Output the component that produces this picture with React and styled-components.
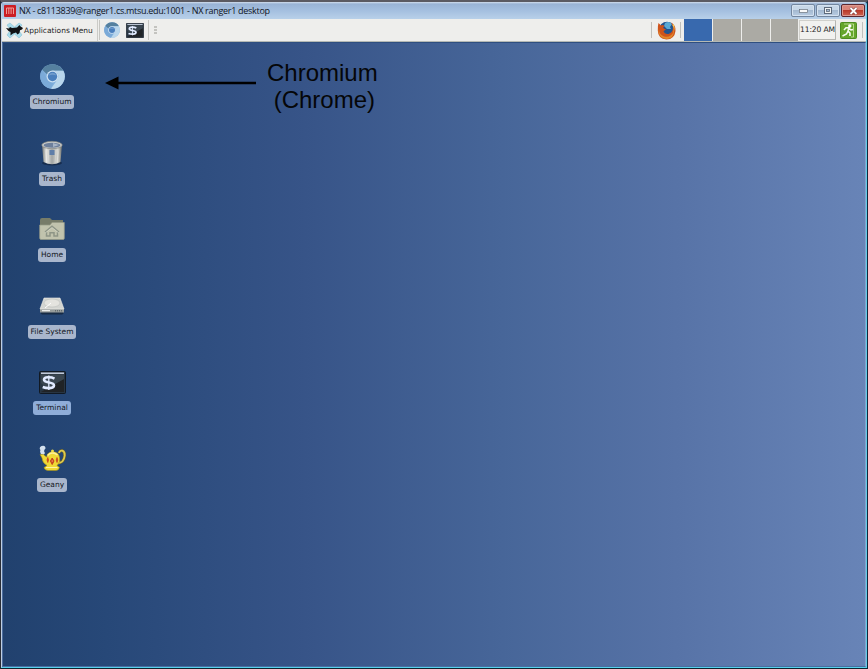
import React from "react";
import styled, { createGlobalStyle } from "styled-components";

const GlobalStyle = createGlobalStyle`
  * { box-sizing: border-box; }
  html, body { margin: 0; padding: 0; overflow: hidden; }
  svg { display: block; flex: none; }
`;

const Window = styled.div`
  width: 868px;
  height: 669px;
  display: flex;
  flex-direction: column;
  background: #243450;
  border-top: 2px solid #5b5a62;
  border-left: 1px solid #292d36;
  border-right: 1px solid #10283c;
  border-bottom: 1px solid #0c242e;
  font-family: "DejaVu Sans", sans-serif;
`;

const Frame = styled.div`
  flex: 1;
  display: flex;
  flex-direction: column;
  border-left: 1px solid #bfcfe4;
  border-right: 1px solid #5fcbe8;
  border-bottom: 1px solid #55d2ee;
  border-radius: 3px 3px 0 0;
  overflow: hidden;
  background: #6a86b4;
`;

const TitleBar = styled.header`
  height: 17px;
  flex: none;
  display: flex;
  align-items: center;
  padding: 0 1px 0 2px;
  background: linear-gradient(#d3deed 0, #99b3d5 2px, #a5c0e0 9px, #b8d0e9 100%);
`;

const Title = styled.h1`
  margin: 0 0 0 3px;
  flex: 1;
  font: 400 9px/16px "Open Sans", sans-serif;
  letter-spacing: -0.29px;
  color: #10141c;
  white-space: nowrap;
`;

const WindowButtons = styled.div`
  display: flex;
  gap: 1px;
  align-self: flex-start;
  padding-top: 2px;
`;

const WindowButton = styled.button`
  width: 24px;
  height: 13px;
  padding: 0;
  display: flex;
  align-items: center;
  justify-content: center;
  border: 1px solid ${(p) => (p.$close ? "#5a2830" : "#73869f")};
  border-radius: 2px;
  box-shadow: inset 0 0 0 1px ${(p) => (p.$close ? "#dd9a90" : "#d5e2f0")};
  background: ${(p) =>
    p.$close
      ? "linear-gradient(#d9857a 0 45%, #b93a2a 50%, #ce6452)"
      : "linear-gradient(#c7d7e8 0 45%, #a4b9d1 50%, #b9cde3)"};
`;

const Panel = styled.nav`
  height: 23px;
  flex: none;
  display: flex;
  align-items: center;
  background: #eeeeec;
  border-bottom: 1px solid #b5b9b4;
  color: #1e1e1e;
`;

const MenuButton = styled.button`
  width: 96px;
  height: 22px;
  padding: 0 0 0 4px;
  display: flex;
  align-items: center;
  gap: 1px;
  border: 0;
  border-right: 1px solid #cbcbc7;
  background: transparent;
  color: inherit;
  font: 7.5px "DejaVu Sans", sans-serif;
  white-space: nowrap;
`;

const Launchers = styled.div`
  display: flex;
  align-items: center;
  gap: 6px;
  height: 20px;
  margin-left: 1px;
  padding: 0 4px;
  border-left: 1px solid #c6c6c2;
  border-right: 1px solid #c6c6c2;
`;

const Grip = styled.div`
  display: grid;
  gap: 1px;
  margin-left: 5px;
  span { width: 3px; height: 2px; background: #c3c3bf; }
`;

const Tray = styled.div`
  margin-left: auto;
  margin-right: 3px;
  display: flex;
  align-items: center;
  height: 22px;
`;

const Rule = styled.span`
  width: 1px;
  height: 16px;
  background: #c0c0bc;
`;

const BrowserSlot = styled.div`
  width: 28px;
  display: flex;
  justify-content: center;
`;

const Pager = styled.div`
  display: grid;
  grid-template-columns: 28px 28px 28px 27px;
  gap: 1px;
  margin: 0 1px 0 3px;
`;

const Workspace = styled.span`
  height: 22px;
  background: ${(p) => (p.$active ? "#3869ae" : "#abaaa4")};
`;

const Clock = styled.time`
  width: 37px;
  height: 20px;
  border: 1px solid #d0d0cc;
  border-right-color: #b5b5b1;
  border-bottom-color: #b5b5b1;
  background: #f1f1ef;
  font: 7.6px/18px "DejaVu Sans", sans-serif;
  letter-spacing: -0.15px;
  white-space: nowrap;
  display: flex;
  justify-content: center;
`;

const LogoutSlot = styled.div`
  width: 26px;
  padding-left: 4px;
`;

const Desktop = styled.main`
  flex: 1;
  display: flex;
  align-items: flex-start;
  border: 1px solid #4c6d9f;
  border-top-color: #2f4f80;
  border-right-color: #88a3cb;
  background: linear-gradient(90deg, #21416e 0, #274878 12%, #375488 35%, #476699 58%, #5773a7 78%, #6884b7 100%);
`;

const Shortcuts = styled.div`
  width: 98px;
  padding: 19px 0 0 0;
  display: grid;
  grid-auto-rows: 76.5px;
`;

const Shortcut = styled.div`
  display: flex;
  flex-direction: column;
  align-items: center;
`;

const IconSlot = styled.div`
  height: 28px;
  display: flex;
  align-items: center;
  margin-bottom: 5px;
`;

const Label = styled.span`
  height: 14px;
  padding: 0 3px;
  border-radius: 3px;
  background: ${(p) => (p.$selected ? "#8fadd8" : "#a9b6cc")};
  color: #14171d;
  font: 7.5px/14px "DejaVu Sans", sans-serif;
  white-space: nowrap;
`;

const Callout = styled.div`
  display: flex;
  align-items: flex-start;
  padding: 16px 0 0 4px;
`;

const CalloutText = styled.p`
  margin: 0 0 0 11px;
  font: 24px/27px "Liberation Sans", sans-serif;
  color: #050608;
  white-space: pre;
`;

const ArrowBox = styled.div`
  padding-top: 17px;
`;

const NxLogo = () => (
  <svg width="12" height="12" viewBox="0 0 12 12">
    <rect width="12" height="12" rx="1" fill="#cb1e24" />
    <path d="M2.5 9V3H9.5V9M4.8 3V9M7.1 3V9" fill="none" stroke="#f4a8a4" strokeWidth=".9" />
  </svg>
);

const MouseLogo = () => (
  <svg width="17" height="17" viewBox="0 0 17 17">
    <path d="M1 3L4 1L8.5 5L13 1L16 3L12.5 8L16 13L13 16L8.5 12L4 16L1 13L4.5 8Z" fill="#a9dbea" stroke="#8cc3d6" strokeWidth=".6" />
    <path d="M0 6L3 6.5L4 5L6 6L11 5.5L13.5 3L14.5 4.5L17 6L16 7.5L14 8.2L13.5 11L11.5 12.5L10 10.5L7 11.5L4.5 13.5L4.5 10L2.5 9Z" fill="#101214" />
  </svg>
);

const ChromiumIcon = ({ size }) => (
  <svg width={size} height={size} viewBox="0 0 24 24">
    <circle cx="12" cy="12" r="11.8" fill="#82b0dc" />
    <path d="M2 5.5A12 12 0 0 1 22.5 6.5H12A5.5 5.5 0 0 0 7 10Z" fill="#55809f" />
    <path d="M2 5.5L7.1 14.6A5.6 5.6 0 0 0 13 17.5L10.5 23.7A12 12 0 0 1 2 5.5" fill="#7baad8" />
    <path d="M12 6.5H22.5A12 12 0 0 1 10.5 23.8L16.8 14.8A5.5 5.5 0 0 0 15.5 7.5Z" fill="#b9d6ec" />
    <circle cx="12" cy="12" r="5.7" fill="#c9def0" />
    <circle cx="12" cy="12" r="4.5" fill="#4a7fbd" />
    <path d="M8.3 11A4 4 0 0 1 15.7 11Q12 9.6 8.3 11" fill="#709ccc" />
  </svg>
);

const TerminalIcon = ({ width, height }) => (
  <svg width={width} height={height} viewBox="0 0 27 23" preserveAspectRatio="none">
    <rect x=".5" y=".5" width="26" height="22" rx="1" fill="#283542" stroke="#111923" />
    <path d="M2 2.2H25" stroke="#d2dbea" strokeWidth="1.4" />
    <path d="M2 21L25 8V21Z" fill="#202326" />
    <path d="M2 12V3.5H25V8L8 17.5Z" fill="#435057" opacity=".65" />
    <path d="M15.5 7.6C12 5.8 5 5.6 5 8.8C5 12.5 15 10.5 15 14.3C15 18 7.5 17.5 3.7 16" fill="none" stroke="#e1eaff" strokeWidth="2.6" />
    <path d="M9.8 4.5V19" stroke="#e1eaff" strokeWidth="1.3" />
  </svg>
);

const TrashIcon = () => (
  <svg width="24" height="26" viewBox="0 0 24 26">
    <defs>
      <linearGradient id="steel">
        <stop offset="0" stopColor="#737674" /><stop offset=".22" stopColor="#e4e4e0" />
        <stop offset=".5" stopColor="#a2a5a4" /><stop offset=".78" stopColor="#d6d6d1" />
        <stop offset="1" stopColor="#6b6e6b" />
      </linearGradient>
    </defs>
    <ellipse cx="12" cy="23" rx="10" ry="2.5" fill="#172d4e" />
    <path d="M2 5L3.5 22Q12 26.5 20.5 22L22 5Z" fill="url(#steel)" />
    <ellipse cx="12" cy="5" rx="10.3" ry="3.7" fill="#c9cac7" stroke="#777b79" strokeWidth=".6" />
    <ellipse cx="12" cy="5.2" rx="8.4" ry="2.5" fill="#6d7f9b" />
    <path d="M13 3L19 5L13 7Z" fill="#a7b4c6" />
    <rect x="9.5" y="10" width="5" height="5" fill="#5f7ea8" />
    <path d="M5 9L7 22M8 10L9 23M16 10L15 23M19 9L17 22" stroke="#fff" strokeWidth=".6" opacity=".4" />
  </svg>
);

const HomeIcon = () => (
  <svg width="26" height="26" viewBox="0 0 26 26">
    <path d="M1 4Q1 2 3 2H11L13 4H24V22H1Z" fill="#777c69" />
    <path d="M.7 9H11L13 6.5H25.3V22.5Q25.3 23.5 24 23.5H2Q.7 23.5 .7 22Z" fill="#c1c3ad" stroke="#979b87" strokeWidth=".7" />
    <path d="M6 16L13 10.3L20 16M7.5 16V20H11V16.7H15V20H18.5V16" fill="none" stroke="#8e9586" strokeWidth="1.5" />
    <path d="M6 17.2L13 11.5L20 17.2" fill="none" stroke="#e5e6d9" strokeWidth=".5" />
  </svg>
);

const DriveIcon = () => (
  <svg width="26" height="26" viewBox="0 0 26 26">
    <path d="M2 19Q1 20.5 3 21.5H23Q25.5 20.5 24 19Z" fill="#172b45" />
    <path d="M1 16H25V19.5H1Z" fill="#989d9c" />
    <path d="M5 5H21L25 16H1Z" fill="#d3d5d1" stroke="#eeeeea" strokeWidth=".6" />
    <ellipse cx="13" cy="10" rx="8" ry="4" fill="#e4e4df" stroke="#bdc1bd" strokeWidth=".6" />
    <path d="M12 10L6 15M3 17.7H11" stroke="#fff" />
    <path d="M16 17.8H23" stroke="#4d575e" strokeDasharray="1 1" />
  </svg>
);

const TeapotIcon = () => (
  <svg width="27" height="27" viewBox="0 0 27 27">
    <path d="M4 11Q0 8 1.5 5Q-.5 2.5 2.5 1Q6.5-.3 6.5 3.5Q4 5.5 6 8Z" fill="#d3e0ee" />
    <path d="M20 8C21 4 26 5 25.7 10.5C25 16.5 22 18 19 18" fill="none" stroke="#77631c" strokeWidth="2.8" />
    <path d="M20 8C21 4 26 5 25.7 10.5C25 16.5 22 18 19 18" fill="none" stroke="#dccb52" strokeWidth="1.8" />
    <path d="M1 9.5L4.5 9.5L7.5 12Q8 8 12 7H16Q20 8 20.5 12Q22 17 18 20.5L20.5 22.5Q20 25 17 25.5H9Q5.5 25 5 22.5L8 20.5Q3 17.5 3 13Z" fill="#f0d936" stroke="#9f8a1a" strokeWidth=".6" />
    <path d="M8.5 10.5Q13 5.5 18.5 10" fill="none" stroke="#fff19a" strokeWidth="1.6" />
    <circle cx="13.5" cy="6" r="1.5" fill="#f3dc42" />
    <path d="M7 22.5H18.5" stroke="#fff5a1" />
    <path d="M13.2 13L15 16L13.2 19.5L11.4 16Z" fill="#c5441e" stroke="#c5441e" />
    <path d="M8.8 12.5L9.6 15L8.8 17.5L8 15ZM18 12.5L18.8 15L18 17.5L17.2 15Z" fill="#c5441e" stroke="#c5441e" strokeWidth=".7" />
    <circle cx="13.2" cy="16" r=".8" fill="#ff9b68" />
  </svg>
);

const FirefoxIcon = () => (
  <svg width="19" height="19" viewBox="0 0 19 19">
    <circle cx="10" cy="8.7" r="8" fill="#23548f" />
    <path d="M8 2Q12-.5 15 3L13 6L14 8L10 8L7 5Z" fill="#5aaad6" />
    <path d="M1.5 2L4 4.5Q6 3.5 7.5 5L6 7L9 8.5L6.5 10Q7.5 13.5 11.5 13Q16 11.5 16 6.5Q15.5 3.5 14 1.5Q19 4 18.5 10Q17.5 18.3 9.5 18.5Q1 18 .8 9.5Q.6 5 1.5 2Z" fill="#cf531b" />
    <path d="M2 8Q2 13.5 7 15.5Q14 17 17 10Q17 17 10 18Q3 18 1.5 11Z" fill="#e2872a" />
    <path d="M15.3 4Q18 7 16 12Q19 7 16.3 3Z" fill="#f8cf59" />
  </svg>
);

const LogoutIcon = () => (
  <svg width="17" height="17" viewBox="0 0 17 17">
    <rect x=".5" y=".5" width="16" height="16" rx="1" fill="#64a52a" stroke="#4d8d20" />
    <path d="M4 2H13.5V15H11" fill="none" stroke="#c9e7a5" strokeWidth=".8" />
    <circle cx="9.8" cy="4" r="1.7" fill="#fff" />
    <path d="M4 8L6 5.8H9L8 9L10 11V14M8 6L11 8L13 7.5M8 9L6.5 12L2.5 14" fill="none" stroke="#f4faed" strokeWidth="1.6" />
  </svg>
);

const Arrow = () => (
  <svg width="151" height="14" viewBox="0 0 151 14">
    <path d="M0 7L13.5 .5V5.7H151V8.3H13.5V13.5Z" fill="#000" />
  </svg>
);

const shortcuts = [
  { name: "Chromium", icon: <ChromiumIcon size={25} /> },
  { name: "Trash", icon: <TrashIcon /> },
  { name: "Home", icon: <HomeIcon /> },
  { name: "File System", icon: <DriveIcon /> },
  { name: "Terminal", icon: <TerminalIcon width={27} height={23} />, selected: true },
  { name: "Geany", icon: <TeapotIcon /> },
];

export default function App() {
  return (
    <>
      <GlobalStyle />
      <Window>
        <Frame>
          <TitleBar>
            <NxLogo />
            <Title>NX - c8113839@ranger1.cs.mtsu.edu:1001 - NX ranger1 desktop</Title>
            <WindowButtons>
              <WindowButton aria-label="Minimize">
                <svg width="9" height="4" viewBox="0 0 9 4"><rect x=".5" y=".5" width="8" height="3" fill="#f7f8f9" stroke="#68727e" strokeWidth=".7" /></svg>
              </WindowButton>
              <WindowButton aria-label="Maximize">
                <svg width="8" height="7" viewBox="0 0 8 7">
                  <rect x=".5" y=".5" width="7" height="6" fill="#f0f2f4" stroke="#5d6a7b" />
                  <rect x="2.5" y="2.5" width="3" height="2" fill="#a4b9d1" stroke="#5d6a7b" strokeWidth=".8" />
                </svg>
              </WindowButton>
              <WindowButton aria-label="Close" $close>
                <svg width="9" height="8" viewBox="0 0 9 8"><path d="M1.5 1L7.5 7M7.5 1L1.5 7" stroke="#733b3d" strokeWidth="3" /><path d="M1.5 1L7.5 7M7.5 1L1.5 7" stroke="#fff" strokeWidth="1.8" /></svg>
              </WindowButton>
            </WindowButtons>
          </TitleBar>
          <Panel>
            <MenuButton><MouseLogo />Applications Menu</MenuButton>
            <Launchers>
              <ChromiumIcon size={16} />
              <TerminalIcon width={18} height={15} />
            </Launchers>
            <Grip><span /><span /><span /></Grip>
            <Tray>
              <Rule />
              <BrowserSlot><FirefoxIcon /></BrowserSlot>
              <Rule />
              <Pager><Workspace $active /><Workspace /><Workspace /><Workspace /></Pager>
              <Clock>11:20 AM</Clock>
              <LogoutSlot><LogoutIcon /></LogoutSlot>
              <Rule />
            </Tray>
          </Panel>
          <Desktop>
            <Shortcuts>
              {shortcuts.map(({ name, icon, selected }) => (
                <Shortcut key={name}>
                  <IconSlot>{icon}</IconSlot>
                  <Label $selected={selected}>{name}</Label>
                </Shortcut>
              ))}
            </Shortcuts>
            <Callout>
              <ArrowBox><Arrow /></ArrowBox>
              <CalloutText>{"Chromium\n (Chrome)"}</CalloutText>
            </Callout>
          </Desktop>
        </Frame>
      </Window>
    </>
  );
}
